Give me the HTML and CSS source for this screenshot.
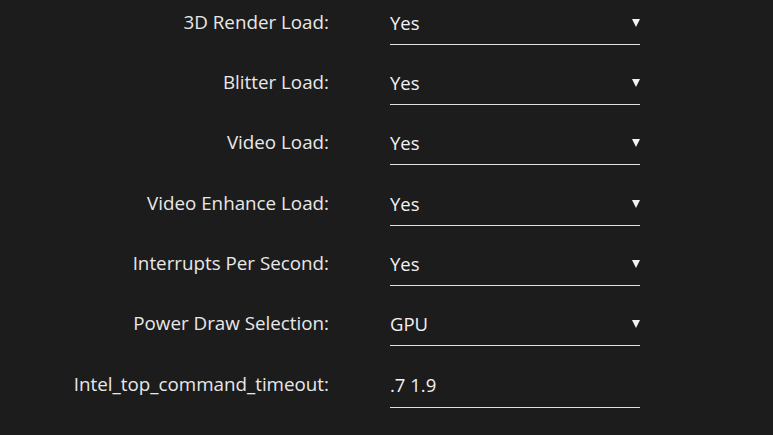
FILE: index.html
```html
<!DOCTYPE html>
<html lang="en">
<head>
    <meta charset="UTF-8">
    <title>GPU Settings</title>
    <link rel="stylesheet" href="styles.css">
</head>
<body>
    <div class="settings">
        <label class="label">3D Render Load:</label>
        <div class="field select">Yes<span class="arrow"></span></div>

        <label class="label">Blitter Load:</label>
        <div class="field select">Yes<span class="arrow"></span></div>

        <label class="label">Video Load:</label>
        <div class="field select">Yes<span class="arrow"></span></div>

        <label class="label">Video Enhance Load:</label>
        <div class="field select">Yes<span class="arrow"></span></div>

        <label class="label">Interrupts Per Second:</label>
        <div class="field select">Yes<span class="arrow"></span></div>

        <label class="label">Power Draw Selection:</label>
        <div class="field select">GPU<span class="arrow"></span></div>

        <label class="label last">Intel_top_command_timeout:</label>
        <div class="field text">.7 1.9</div>
    </div>
</body>
</html>
```

FILE: styles.css
```css
/* General Styles */
body {
    margin: 0;
    background-color: #1c1c1c;
    color: #ececec;
    font-family: "Open Sans", "Liberation Sans", sans-serif;
    font-size: 18px;
    height: 435px;
    overflow: hidden;
}

.settings {
    display: grid;
    grid-template-columns: 321px 250px;
    column-gap: 61px;
    row-gap: 15.2px;
    padding-left: 8px;
}

.label {
    text-align: right;
    padding-top: 10px;
    line-height: 24px;
    font-size: 18.8px;
    color: #e8e8e8;
}

.label.last {
    padding-top: 11px;
}

.field {
    position: relative;
    padding: 11px 0 9px 0;
    line-height: 24px;
    font-size: 18.5px;
    border-bottom: 1px solid #e0e0e0;
    color: #f2f2f2;
}

.field.text {
    padding-top: 12px;
    padding-bottom: 10px;
}

/* dropdown arrow */
.arrow {
    position: absolute;
    right: 0;
    top: 19px;
    width: 0;
    height: 0;
    border-left: 4.5px solid transparent;
    border-right: 4.5px solid transparent;
    border-top: 8px solid #f2f2f2;
}
```
